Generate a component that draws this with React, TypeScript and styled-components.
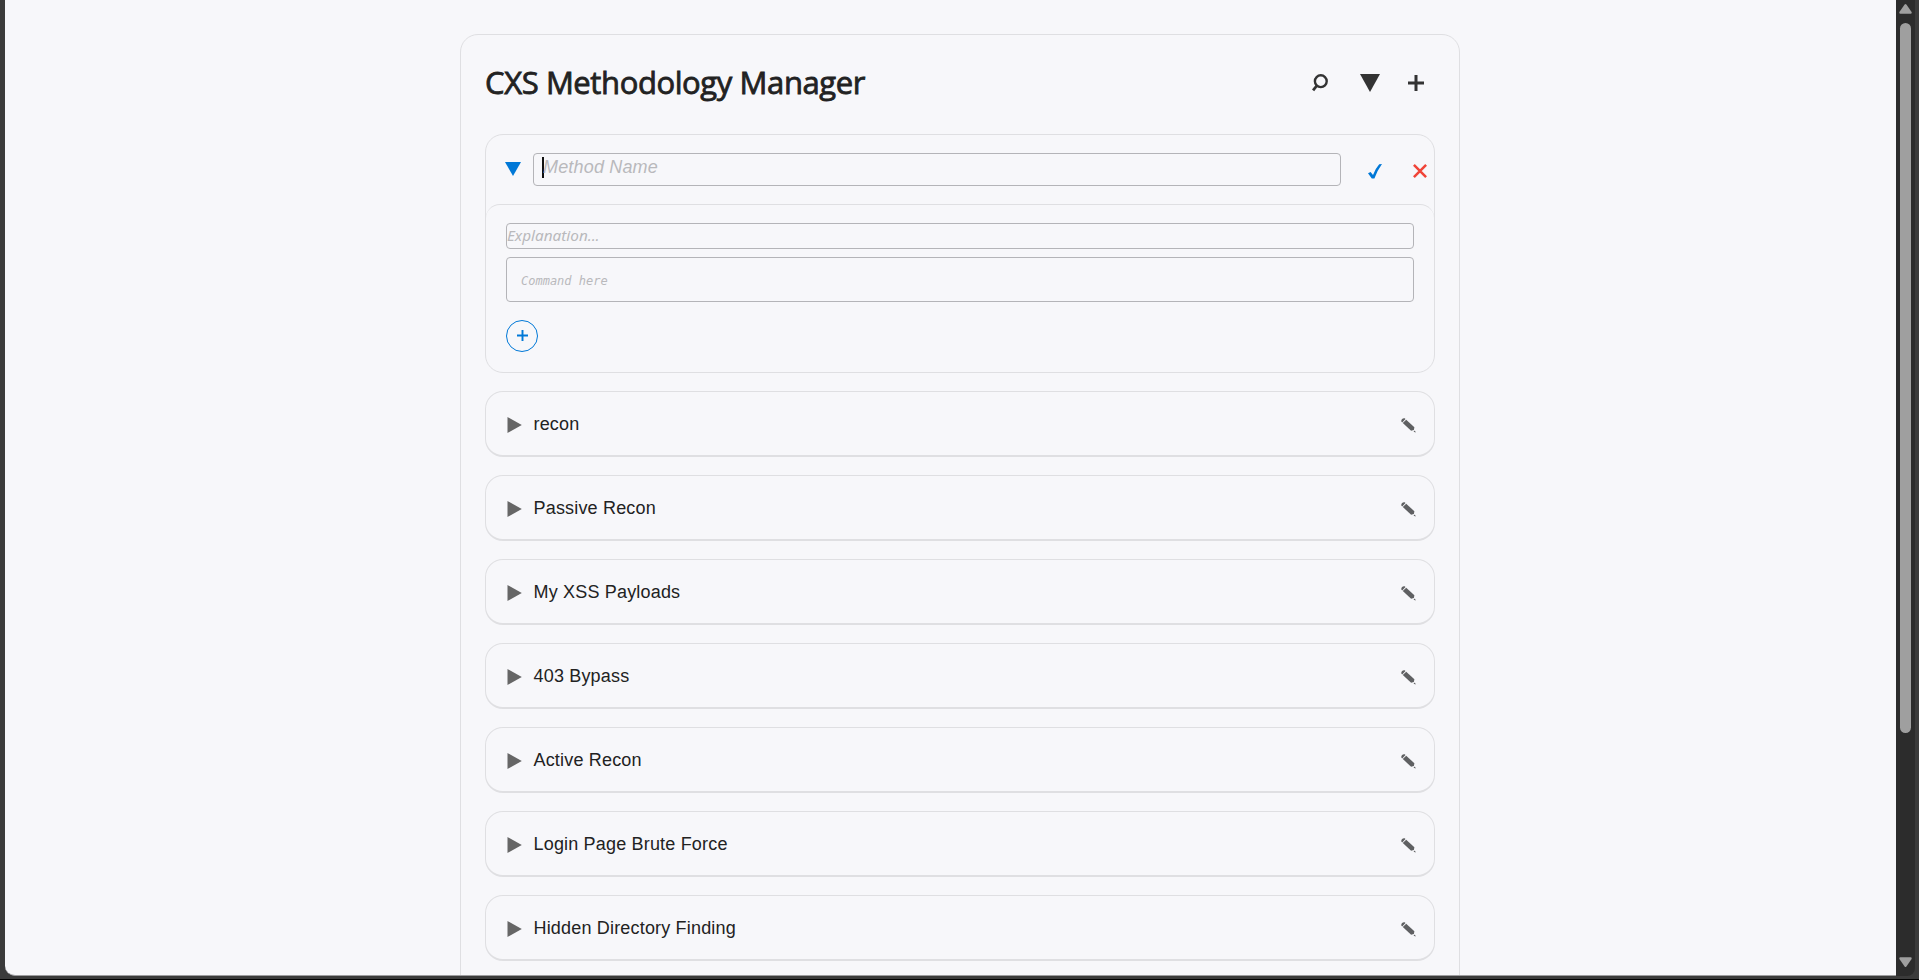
import React from 'react';
import styled, { createGlobalStyle, css } from 'styled-components';

const GlobalStyle = createGlobalStyle`
  *, *::before, *::after { box-sizing: border-box; }
  html, body { margin: 0; height: 980px; overflow: hidden; background: #000; }
  button { border: 0; padding: 0; background: none; font: inherit; color: inherit; display: block; }
`;

const Frame = styled.div`
  display: flex;
  width: 1919px;
  height: 979px;
  padding: 0 4px 3px 5px;
  background: #3b3b3b;
`;

const Page = styled.main`
  flex: 1;
  height: 976px;
  padding-top: 34px;
  overflow: hidden;
  background: #f7f7fa;
  border-bottom: 1px solid #9d9d9f;
  border-bottom-left-radius: 10px;
  font-family: 'Liberation Sans', Arial, sans-serif;
  color: #222;
`;

const ScrollTrack = styled.aside`
  display: flex;
  flex-direction: column;
  align-items: center;
  width: 19px;
  height: 976px;
  padding: 4px 0 9px;
  background: #2c2c2c;
  border-bottom-right-radius: 8px;
`;

const Thumb = styled.div`
  width: 11px;
  height: 710px;
  margin: 9px 0 auto;
  border-radius: 6px;
  background: #9f9f9f;
`;

const Panel = styled.section`
  width: 1000px;
  height: 1300px;
  margin-left: 455px;
  padding: 24px;
  border: 1px solid #dfdfe2;
  border-radius: 18px;
`;

const TitleBar = styled.header`
  display: flex;
  align-items: center;
  justify-content: space-between;
  height: 48px;
  margin-bottom: 27px;
`;

const Title = styled.h1`
  margin: 0;
  font: 400 31px/46px 'Open Sans', sans-serif;
  height: 48px;
  letter-spacing: -0.4px;
  -webkit-text-stroke: 0.8px currentColor;
  white-space: nowrap;
`;

const Tools = styled.div`
  display: flex;
  align-items: center;
  gap: 16px;
  padding-right: 4px;
  color: #333;
`;

const IconButton = styled.button<{ $w: number; $h: number }>`
  width: ${p => p.$w}px;
  height: ${p => p.$h}px;
  svg { display: block; }
`;

const Card = styled.article<{ $open?: boolean }>`
  height: ${p => (p.$open ? 239 : 66)}px;
  margin-bottom: 18px;
  border: 1px solid #dfdfe2;
  border-bottom-width: ${p => (p.$open ? 1 : 2)}px;
  border-radius: 18px;
`;

const CardHead = styled.div<{ $open?: boolean }>`
  display: flex;
  align-items: ${p => (p.$open ? 'flex-start' : 'center')};
  height: ${p => (p.$open ? 69 : 63)}px;
  padding: ${p => (p.$open ? '18px 6px 0 19px' : '0 18px 0 21px')};
`;

const Toggle = styled.span<{ $open?: boolean }>`
  flex: none;
  width: ${p => (p.$open ? 28 : 26.5)}px;
  padding-top: ${p => (p.$open ? 9 : 2)}px;
  svg { display: block; }
`;

const Name = styled.span`
  flex: 1;
  font-size: 18px;
  line-height: 24px;
  letter-spacing: 0.18px;
`;

const field = css`
  border: 1px solid #b4b4b8;
  border-radius: 4px;
  color: #b9b9bc;
  font-style: italic;
  white-space: nowrap;
`;

const NameField = styled.div`
  ${field}
  display: flex;
  width: 808px;
  height: 33px;
  padding: 3px 0 0 8px;
  font-size: 18px;
  line-height: 21px;
  letter-spacing: 0.17px;
`;

const Caret = styled.span`
  width: 2px;
  height: 21px;
  margin-right: -1px;
  background: #111;
`;

const Confirm = styled.div`
  display: flex;
  gap: 31px;
  padding: 11px 0 0 27px;
`;

const CardBody = styled.div`
  height: 168px;
  padding: 18px 20px 0;
  border-top: 1px solid #dfdfe2;
  border-radius: 14px;
`;

const Explanation = styled.div`
  ${field}
  height: 26px;
  font: italic 15.3px/23px 'Noto Sans', sans-serif;
`;

const Command = styled.div`
  ${field}
  height: 45px;
  margin: 8px 0 18px;
  padding-left: 14px;
  font: italic 12px/46px 'DejaVu Sans Mono', monospace;
`;

const AddStep = styled.button`
  display: grid;
  place-items: center;
  width: 32px;
  height: 32px;
  padding-bottom: 2px;
  border: 1px solid #0078d7;
  border-radius: 50%;
  color: #0078d7;
`;

const SearchIcon = () => (
  <svg width="17" height="18" viewBox="0 0 17 18" fill="none" stroke="currentColor">
    <circle cx="8.8" cy="7.2" r="5.9" strokeWidth="2.4" />
    <path d="M4.9 11.5L1.1 16.3" strokeWidth="2.8" />
  </svg>
);

const PlusIcon = ({ size, weight }: { size: number; weight: number }) => (
  <svg width={size} height={size} viewBox="0 0 16 16" stroke="currentColor" strokeWidth={weight}>
    <path d="M8 0V16M0 8H16" />
  </svg>
);

const Down = ({ w, h }: { w: number; h: number }) => (
  <svg width={w} height={h} viewBox="0 0 20 18" preserveAspectRatio="none" fill="currentColor">
    <path d="M0 0H20L10 18Z" />
  </svg>
);

const Right = () => (
  <svg width="15" height="16" viewBox="0 0 15 16" fill="#666">
    <path d="M.5 0V16L14.8 8Z" />
  </svg>
);

const Pencil = () => (
  <svg width="15" height="15" viewBox="0 0 15 15" fill="#5f6062">
    <path d="M.3 3.4Q.1 1.7 1.1.9 2.2 0 3.7.3L4.5 1.1 1.2 4.4Z" />
    <path d="M1.8 5L5.2 1.7 13.4 9.3 12.9 12 10.1 12.8Z" />
    <path d="M14.8 14.5L12.5 13.8 13.9 12.4Z" />
  </svg>
);

const names = [
  'recon',
  'Passive Recon',
  'My XSS Payloads',
  '403 Bypass',
  'Active Recon',
  'Login Page Brute Force',
  'Hidden Directory Finding',
];

export default function App() {
  return (
    <>
      <GlobalStyle />
      <Frame>
        <Page>
          <Panel>
            <TitleBar>
              <Title>CXS Methodology Manager</Title>
              <Tools>
                <IconButton $w={32} $h={18} aria-label="Search"><SearchIcon /></IconButton>
                <IconButton $w={32} $h={18} aria-label="Collapse"><Down w={20} h={18} /></IconButton>
                <IconButton $w={23} $h={16} aria-label="Add"><PlusIcon size={16} weight={3} /></IconButton>
              </Tools>
            </TitleBar>
            <Card $open>
              <CardHead $open>
                <Toggle $open style={{ color: '#0078d7' }}><Down w={16} h={14} /></Toggle>
                <NameField><Caret />Method Name</NameField>
                <Confirm>
                  <IconButton $w={14} $h={15} aria-label="Save">
                    <svg width="14" height="15" viewBox="0 0 14 15" fill="#0078d7">
                      <path d="M0 9.2L2.6 7.9 5 11Q7.3 4.6 11.2.2L14 0Q9.2 6.6 6.4 14.4L3.8 14.6Z" />
                    </svg>
                  </IconButton>
                  <IconButton $w={14} $h={14} aria-label="Cancel">
                    <svg width="14" height="14" viewBox="0 0 14 14" stroke="#f04438" strokeWidth="2.5">
                      <path d="M.9.9L13.1 13.1M13.1.9L.9 13.1" />
                    </svg>
                  </IconButton>
                </Confirm>
              </CardHead>
              <CardBody>
                <Explanation>Explanation...</Explanation>
                <Command>Command here</Command>
                <AddStep aria-label="Add step"><PlusIcon size={11} weight={2.8} /></AddStep>
              </CardBody>
            </Card>
            {names.map(name => (
              <Card key={name}>
                <CardHead>
                  <Toggle><Right /></Toggle>
                  <Name>{name}</Name>
                  <IconButton $w={15} $h={11} aria-label="Edit"><Pencil /></IconButton>
                </CardHead>
              </Card>
            ))}
          </Panel>
        </Page>
        <ScrollTrack>
          <svg width="13" height="10" viewBox="0 0 13 10" fill="#9f9f9f">
            <path d="M5.6.6Q6.5-.4 7.4.6L12.6 8Q13 9.6 11.7 9.7H1.3Q0 9.6.4 8Z" />
          </svg>
          <Thumb />
          <svg width="13" height="10" viewBox="0 0 13 10" fill="#9f9f9f">
            <path d="M5.6 9.4Q6.5 10.4 7.4 9.4L12.6 2Q13 .4 11.7.3H1.3Q0 .4.4 2Z" />
          </svg>
        </ScrollTrack>
      </Frame>
    </>
  );
}
